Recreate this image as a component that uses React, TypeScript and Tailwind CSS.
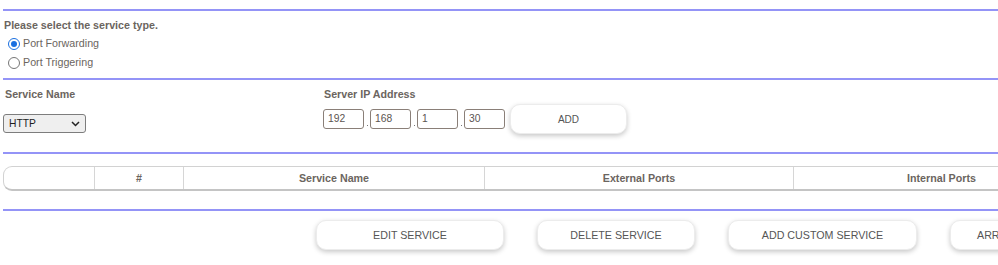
import React from 'react';

const font = { fontFamily: '"Liberation Sans", Arial, sans-serif' };

function Rule() {
  return <div className="h-[2px] bg-[#9494f7]" />;
}

function Radio({ checked, label }: { checked?: boolean; label: string }) {
  return (
    <div className="flex h-[19px] items-center pl-[5px]">
      <span
        className={
          'flex h-[12px] w-[12px] items-center justify-center rounded-full border-[1.5px] ' +
          (checked ? 'border-[#1a6fe0]' : 'border-[#767676]')
        }
      >
        {checked && <span className="h-[6px] w-[6px] rounded-full bg-[#1a6fe0]" />}
      </span>
      <span className="ml-[3px] text-[10.7px] text-[#6b6560]">{label}</span>
    </div>
  );
}

function IpBox({ value }: { value: string }) {
  return (
    <div className="flex h-[20px] w-[41px] items-center rounded-[3px] border border-[#8a7f78] pl-[4px] text-[10.3px] text-[#5c5552]">
      {value}
    </div>
  );
}

function Dot() {
  return (
    <div className="flex h-[20px] w-[6px] items-end justify-center pb-[3px]">
      <span className="h-[1px] w-[1px] bg-[#777]" />
    </div>
  );
}

function Btn({ label, w }: { label: string; w: string }) {
  return (
    <button
      className={
        'flex h-[30px] shrink-0 items-center justify-center rounded-[10px] border border-[#ececec] bg-white text-[10.7px] text-[#555] shadow-[0_2px_5px_rgba(0,0,0,0.22)] ' +
        w
      }
    >
      {label}
    </button>
  );
}

export default function App() {
  const cols = [
    { label: '', w: 'w-[90px]' },
    { label: '#', w: 'w-[89px]' },
    { label: 'Service Name', w: 'w-[301px]' },
    { label: 'External Ports', w: 'w-[309px]' },
    { label: 'Internal Ports', w: 'w-[296px]' },
  ];

  return (
    <div className="h-[265px] w-full overflow-hidden bg-white pl-[3px] pt-[9px]" style={font}>
      <Rule />

      {/* Service type */}
      <div className="mt-[7px] pl-[1px] text-[10.7px] font-bold leading-[14px] text-[#6b6560]">
        Please select the service type.
      </div>
      <div className="mt-[2px]">
        <Radio checked label="Port Forwarding" />
        <Radio label="Port Triggering" />
      </div>

      <div className="mt-[6px]">
        <Rule />
      </div>

      {/* Service name + server IP */}
      <div className="flex">
        <div className="w-[320px] shrink-0">
          <div className="mt-[7px] pl-[2px] text-[10.7px] font-bold leading-[14px] text-[#6b6560]">
            Service Name
          </div>
          <div className="mt-[13px] flex h-[19px] w-[83px] items-center justify-between rounded-[3px] border border-[#7d7d7d] bg-[#efefef] pl-[5px] pr-[5px] text-[10.3px] text-[#1e1e1e]">
            <span>HTTP</span>
            <svg width="9" height="6" viewBox="0 0 9 6">
              <path d="M1 1l3.5 3.5L8 1" fill="none" stroke="#222" strokeWidth="1.5" />
            </svg>
          </div>
        </div>
        <div>
          <div className="mt-[7px] pl-[1px] text-[10.7px] font-bold leading-[14px] text-[#6b6560]">
            Server IP Address
          </div>
          <div className="mt-[4px] flex h-[28px] items-center">
            <IpBox value="192" />
            <Dot />
            <IpBox value="168" />
            <Dot />
            <IpBox value="1" />
            <Dot />
            <IpBox value="30" />
            <div className="ml-[5px]">
              <Btn label="ADD" w="w-[117px] h-[29px] text-[10px]" />
            </div>
          </div>
        </div>
      </div>

      <div className="mt-[19px]">
        <Rule />
      </div>

      {/* Table header */}
      <div className="mt-[12px] flex h-[25px] w-max rounded-l-[9px] border border-b-2 border-[#d2d2d2] border-b-[#c4c4c4] bg-white">
        {cols.map((c, i) => (
          <div
            key={i}
            className={
              'flex shrink-0 items-center justify-center text-[10.7px] font-bold text-[#6b6560] ' +
              c.w +
              (i > 0 ? ' border-l border-[#d6d6d6]' : '')
            }
          >
            {c.label}
          </div>
        ))}
      </div>

      <div className="mt-[18px]">
        <Rule />
      </div>

      {/* Actions */}
      <div className="ml-[313px] mt-[9px] flex gap-[33px]">
        <Btn label="EDIT SERVICE" w="w-[188px]" />
        <Btn label="DELETE SERVICE" w="w-[158px]" />
        <Btn label="ADD CUSTOM SERVICE" w="w-[189px]" />
        <Btn label="ARRANGE SERVICE" w="w-[150px] justify-start pl-[26px]" />
      </div>
    </div>
  );
}
